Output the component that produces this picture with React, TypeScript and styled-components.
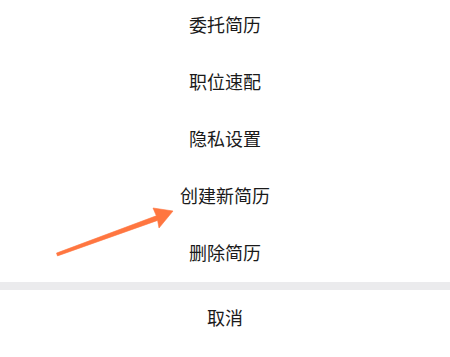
import React from 'react'
import styled, { createGlobalStyle } from 'styled-components'

const GlobalStyle = createGlobalStyle`
  html, body {
    margin: 0;
    padding: 0;
    background: #ffffff;
  }
  body {
    font-family: "Noto Sans CJK SC", "Noto Sans", sans-serif;
  }
`;

const Sheet = styled.div`
  position: relative;
  width: 450px;
  height: 357px;
  overflow: hidden;
  background: #ffffff;
`;

const OptionList = styled.ul<{ $offset?: number }>`
  list-style: none;
  margin: ${p => p.$offset ?? 0}px 0 0;
  padding: 0;
  display: flex;
  flex-direction: column;
`;

const Option = styled.li`
  height: 57px;
  box-sizing: border-box;
  padding-bottom: 3px;
  display: flex;
  align-items: center;
  justify-content: center;
  font-size: 18px;
  color: #1a1a1a;
  cursor: pointer;
`;

const Gap = styled.div`
  height: 8px;
  background: #ebebed;
`;

const Pointer = styled.svg`
  position: absolute;
  left: 0;
  top: 0;
  pointer-events: none;
`;

const options = ['委托简历', '职位速配', '隐私设置', '创建新简历', '删除简历'];

const App = () => {
    return (
        <>
            <GlobalStyle />
            <Sheet>
                <OptionList $offset={-3}>
                    {options.map(label => (
                        <Option key={label}>{label}</Option>
                    ))}
                </OptionList>
                <Gap />
                <OptionList>
                    <Option>取消</Option>
                </OptionList>

                {/* annotation arrow pointing at 创建新简历 */}
                <Pointer width="450" height="357" viewBox="0 0 450 357">
                    <polygon
                        points="56.5,253.1 156.3,215.8 153,208 173,211 159,228 157.6,220.4 57.5,255.9"
                        fill="#ff7640"
                        stroke="#ff7640"
                        strokeWidth="0.6"
                        strokeLinejoin="round"
                    />
                </Pointer>
            </Sheet>
        </>
    )
}

export default App
